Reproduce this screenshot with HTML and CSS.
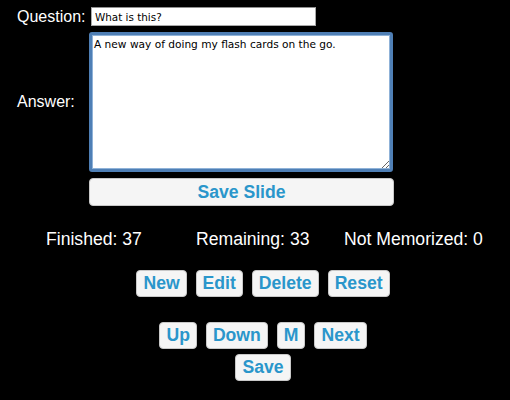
FILE: index.html
```html
<!DOCTYPE html>
<html>
<head>
<meta charset="utf-8">
<link rel="stylesheet" href="styles.css">
</head>
<body>
<div class="form">
  <label class="label">Question:</label>
  <div class="field"><input class="question" type="text" value="What is this?"></div>
  <label class="label label-middle">Answer:</label>
  <div class="field"><textarea class="answer">A new way of doing my flash cards on the go.</textarea></div>
  <div></div>
  <div class="field"><button class="btn save-slide">Save Slide</button></div>
</div>
<div class="stats">
  <span class="stat stat-1">Finished: 37</span>
  <span class="stat stat-2">Remaining: 33</span>
  <span class="stat">Not Memorized: 0</span>
</div>
<div class="controls">
  <div class="row row-1">
    <button class="btn">New</button>
    <button class="btn">Edit</button>
    <button class="btn">Delete</button>
    <button class="btn">Reset</button>
  </div>
  <div class="row row-2">
    <button class="btn">Up</button>
    <button class="btn">Down</button>
    <button class="btn">M</button>
    <button class="btn">Next</button>
  </div>
  <div class="row row-3">
    <button class="btn">Save</button>
  </div>
</div>
</body>
</html>
```
FILE: styles.css
```css
html, body {
  margin: 0;
  padding: 0;
  background: #000;
  color: #fff;
  font-family: "Liberation Sans", Arial, sans-serif;
}

.form {
  display: grid;
  grid-template-columns: 72px 305px;
  row-gap: 6px;
  padding: 7px 0 0 17px;
}

.label {
  font-size: 16px;
  line-height: 18px;
  align-self: center;
  color: #fff;
}

.question {
  display: block;
  box-sizing: border-box;
  margin: 0 0 0 2px;
  width: 225px;
  height: 19px;
  padding: 1px 3px;
  border: 1px solid #a9a9a9;
  border-top-color: #8f8f8f;
  background: #fff;
  color: #000;
  font-family: "DejaVu Sans", sans-serif;
  font-size: 10.4px;
  outline: none;
}

.answer {
  display: block;
  box-sizing: border-box;
  margin: 0;
  width: 304px;
  height: 140px;
  padding: 3px 2px;
  border: 3px solid #4f7fb5;
  border-radius: 3px;
  box-shadow: inset 0 0 0 1px #8fb2d8;
  background: #fff;
  color: #000;
  font-family: "DejaVu Sans", sans-serif;
  font-size: 10.6px;
  line-height: 13px;
  outline: none;
}

.btn {
  box-sizing: border-box;
  height: 27px;
  margin: 0;
  padding: 2px 6px;
  border: 1px solid #c8c8c8;
  border-radius: 4px;
  background: #f5f5f5;
  color: #2a96cb;
  font-family: "Liberation Sans", Arial, sans-serif;
  font-weight: bold;
  font-size: 17.6px;
  line-height: 21px;
}

.save-slide {
  display: block;
  width: 305px;
  height: 28px;
}

.stats {
  display: flex;
  margin-top: 23px;
  padding-left: 46px;
  font-size: 17.6px;
  line-height: 20px;
}

.stat-1 {
  width: 150px;
}

.stat-2 {
  width: 148px;
}

.controls {
  margin-left: 16px;
  width: 494px;
}

.row {
  display: flex;
  justify-content: center;
  gap: 9px;
}

.row-1 {
  margin-top: 21px;
}

.row-2 {
  margin-top: 25px;
}

.row-3 {
  margin-top: 5px;
}
```
